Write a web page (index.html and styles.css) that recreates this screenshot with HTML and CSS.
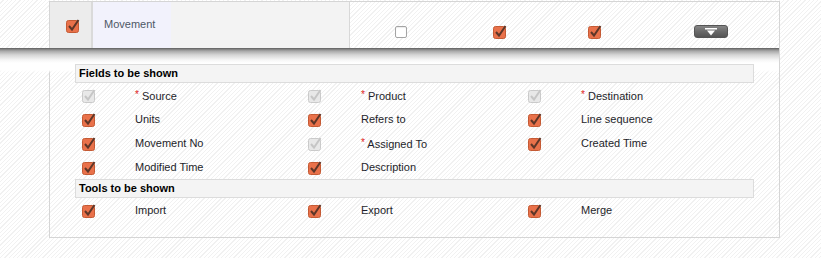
FILE: index.html
```html
<!DOCTYPE html>
<html>
<head>
<meta charset="utf-8">
<link rel="stylesheet" href="styles.css">
</head>
<body>
<div class="panel">
  <div class="head-row">
    <div class="c-sel"><svg class="cb" width="14" height="15" viewBox="0 0 14 15"><rect x="0.5" y="2.5" width="12" height="12" rx="2" fill="#e9714a" stroke="#c45a34"/><polyline points="3,8 6,11.5 12.5,2" fill="none" stroke="#5e3628" stroke-width="2"/></svg></div>
    <div class="c-name">Movement</div>
    <div class="c-blank"></div>
    <div class="c-opt"><span class="box-off"></span></div>
    <div class="c-opt"><svg class="cb" width="14" height="15" viewBox="0 0 14 15"><rect x="0.5" y="2.5" width="12" height="12" rx="2" fill="#e9714a" stroke="#c45a34"/><polyline points="3,8 6,11.5 12.5,2" fill="none" stroke="#5e3628" stroke-width="2"/></svg></div>
    <div class="c-opt"><svg class="cb" width="14" height="15" viewBox="0 0 14 15"><rect x="0.5" y="2.5" width="12" height="12" rx="2" fill="#e9714a" stroke="#c45a34"/><polyline points="3,8 6,11.5 12.5,2" fill="none" stroke="#5e3628" stroke-width="2"/></svg></div>
    <div class="c-opt"><span class="drop"><svg width="12" height="8" viewBox="0 0 12 8"><rect x="0" y="0" width="12" height="1.5" fill="#fff"/><polygon points="2,2.5 10,2.5 6,7.5" fill="#fff"/></svg></span></div>
  </div>
  <div class="details">
    <div class="sec-title">Fields to be shown</div>
    <div class="grid">
      <div class="cbc"><svg class="cb" width="14" height="15" viewBox="0 0 14 15"><rect x="0.5" y="2.5" width="12" height="12" rx="2" fill="#e8e8e8" stroke="#cacaca"/><polyline points="3,8 6,11.5 12.5,2" fill="none" stroke="#c6c6c6" stroke-width="2"/></svg></div>
      <div class="lbl"><span class="req">*</span> Source</div>
      <div class="cbc"><svg class="cb" width="14" height="15" viewBox="0 0 14 15"><rect x="0.5" y="2.5" width="12" height="12" rx="2" fill="#e8e8e8" stroke="#cacaca"/><polyline points="3,8 6,11.5 12.5,2" fill="none" stroke="#c6c6c6" stroke-width="2"/></svg></div>
      <div class="lbl"><span class="req">*</span> Product</div>
      <div class="cbc"><svg class="cb" width="14" height="15" viewBox="0 0 14 15"><rect x="0.5" y="2.5" width="12" height="12" rx="2" fill="#e8e8e8" stroke="#cacaca"/><polyline points="3,8 6,11.5 12.5,2" fill="none" stroke="#c6c6c6" stroke-width="2"/></svg></div>
      <div class="lbl"><span class="req">*</span> Destination</div>

      <div class="cbc"><svg class="cb" width="14" height="15" viewBox="0 0 14 15"><rect x="0.5" y="2.5" width="12" height="12" rx="2" fill="#e9714a" stroke="#c45a34"/><polyline points="3,8 6,11.5 12.5,2" fill="none" stroke="#5e3628" stroke-width="2"/></svg></div>
      <div class="lbl">Units</div>
      <div class="cbc"><svg class="cb" width="14" height="15" viewBox="0 0 14 15"><rect x="0.5" y="2.5" width="12" height="12" rx="2" fill="#e9714a" stroke="#c45a34"/><polyline points="3,8 6,11.5 12.5,2" fill="none" stroke="#5e3628" stroke-width="2"/></svg></div>
      <div class="lbl">Refers to</div>
      <div class="cbc"><svg class="cb" width="14" height="15" viewBox="0 0 14 15"><rect x="0.5" y="2.5" width="12" height="12" rx="2" fill="#e9714a" stroke="#c45a34"/><polyline points="3,8 6,11.5 12.5,2" fill="none" stroke="#5e3628" stroke-width="2"/></svg></div>
      <div class="lbl">Line sequence</div>

      <div class="cbc"><svg class="cb" width="14" height="15" viewBox="0 0 14 15"><rect x="0.5" y="2.5" width="12" height="12" rx="2" fill="#e9714a" stroke="#c45a34"/><polyline points="3,8 6,11.5 12.5,2" fill="none" stroke="#5e3628" stroke-width="2"/></svg></div>
      <div class="lbl">Movement No</div>
      <div class="cbc"><svg class="cb" width="14" height="15" viewBox="0 0 14 15"><rect x="0.5" y="2.5" width="12" height="12" rx="2" fill="#e8e8e8" stroke="#cacaca"/><polyline points="3,8 6,11.5 12.5,2" fill="none" stroke="#c6c6c6" stroke-width="2"/></svg></div>
      <div class="lbl"><span class="req">*</span> Assigned To</div>
      <div class="cbc"><svg class="cb" width="14" height="15" viewBox="0 0 14 15"><rect x="0.5" y="2.5" width="12" height="12" rx="2" fill="#e9714a" stroke="#c45a34"/><polyline points="3,8 6,11.5 12.5,2" fill="none" stroke="#5e3628" stroke-width="2"/></svg></div>
      <div class="lbl">Created Time</div>

      <div class="cbc"><svg class="cb" width="14" height="15" viewBox="0 0 14 15"><rect x="0.5" y="2.5" width="12" height="12" rx="2" fill="#e9714a" stroke="#c45a34"/><polyline points="3,8 6,11.5 12.5,2" fill="none" stroke="#5e3628" stroke-width="2"/></svg></div>
      <div class="lbl">Modified Time</div>
      <div class="cbc"><svg class="cb" width="14" height="15" viewBox="0 0 14 15"><rect x="0.5" y="2.5" width="12" height="12" rx="2" fill="#e9714a" stroke="#c45a34"/><polyline points="3,8 6,11.5 12.5,2" fill="none" stroke="#5e3628" stroke-width="2"/></svg></div>
      <div class="lbl">Description</div>
      <div class="cbc"></div>
      <div class="lbl"></div>
    </div>
    <div class="sec-title">Tools to be shown</div>
    <div class="grid">
      <div class="cbc"><svg class="cb" width="14" height="15" viewBox="0 0 14 15"><rect x="0.5" y="2.5" width="12" height="12" rx="2" fill="#e9714a" stroke="#c45a34"/><polyline points="3,8 6,11.5 12.5,2" fill="none" stroke="#5e3628" stroke-width="2"/></svg></div>
      <div class="lbl">Import</div>
      <div class="cbc"><svg class="cb" width="14" height="15" viewBox="0 0 14 15"><rect x="0.5" y="2.5" width="12" height="12" rx="2" fill="#e9714a" stroke="#c45a34"/><polyline points="3,8 6,11.5 12.5,2" fill="none" stroke="#5e3628" stroke-width="2"/></svg></div>
      <div class="lbl">Export</div>
      <div class="cbc"><svg class="cb" width="14" height="15" viewBox="0 0 14 15"><rect x="0.5" y="2.5" width="12" height="12" rx="2" fill="#e9714a" stroke="#c45a34"/><polyline points="3,8 6,11.5 12.5,2" fill="none" stroke="#5e3628" stroke-width="2"/></svg></div>
      <div class="lbl">Merge</div>
    </div>
  </div>
</div>
</body>
</html>
```
FILE: styles.css
```css
html, body {
  margin: 0;
  padding: 0;
}
body {
  width: 821px;
  height: 258px;
  overflow: hidden;
  font-family: "Liberation Sans", Arial, sans-serif;
  font-size: 11px;
  color: #222;
  background: repeating-linear-gradient(135deg, #ffffff 0, #ffffff 2.1px, #f1f1f1 2.1px, #f1f1f1 3px);
}
.panel {
  box-sizing: border-box;
  margin: 1px 0 0 49px;
  width: 731px;
  height: 237px;
  border: 1px solid #d5d5d5;
}
.head-row {
  display: grid;
  grid-template-columns: 43px 78px 179px 102px 96px 94px 1fr;
  height: 46px;
}
.c-sel {
  box-sizing: border-box;
  background: #ececec;
  border-right: 2px solid #dadada;
  display: flex;
  align-items: center;
  padding-left: 16px;
}
.c-name {
  background: #f2f2fc;
  color: #4e5866;
  display: flex;
  align-items: center;
  padding-left: 11px;
  padding-bottom: 2px;
}
.c-blank {
  box-sizing: border-box;
  background: #f3f3f3;
  border-right: 1px solid #d8d8d8;
}
.c-opt {
  display: flex;
  align-items: center;
  justify-content: center;
  padding-top: 13px;
}
.cb {
  display: block;
}
.box-off {
  box-sizing: border-box;
  display: block;
  width: 12px;
  height: 12px;
  border: 1px solid #a4a4a4;
  border-radius: 2px;
  background: #fff;
  box-shadow: inset 0 1px 1px rgba(0,0,0,0.08);
}
.drop {
  box-sizing: border-box;
  display: flex;
  align-items: flex-start;
  justify-content: center;
  padding-top: 2px;
  width: 34px;
  height: 13px;
  border-radius: 3px;
  border: 1px solid #555;
  background: linear-gradient(#868686, #6a6a6a 50%, #555);
}
.drop svg {
  display: block;
}
.details {
  position: relative;
  padding: 16px 25px 15px 25px;
}
.details::before {
  content: "";
  position: absolute;
  left: -50px;
  right: 0;
  top: 0;
  height: 25px;
  background: linear-gradient(#5c5c5c 0, #7a7a7a 1px, #a8a8a8 3px, #d6d6d6 7px, #f6f6f6 12px, #ffffff 15px, #ffffff 22px, rgba(255,255,255,0) 25px);
}
.sec-title {
  position: relative;
  box-sizing: border-box;
  height: 19px;
  line-height: 17px;
  border: 1px solid #dcdcdc;
  background: #f4f4f4;
  font-weight: bold;
  color: #000;
  padding-left: 3px;
}
.grid {
  position: relative;
  display: grid;
  grid-template-columns: 60px 166px 60px 160px 60px 1fr;
  grid-auto-rows: 24px;
  align-items: center;
}
.cbc {
  padding-left: 7px;
  padding-top: 1px;
}
.lbl {
  color: #1e1e2a;
}
.req {
  color: #e02020;
  font-size: 10px;
  vertical-align: 2px;
}
```
